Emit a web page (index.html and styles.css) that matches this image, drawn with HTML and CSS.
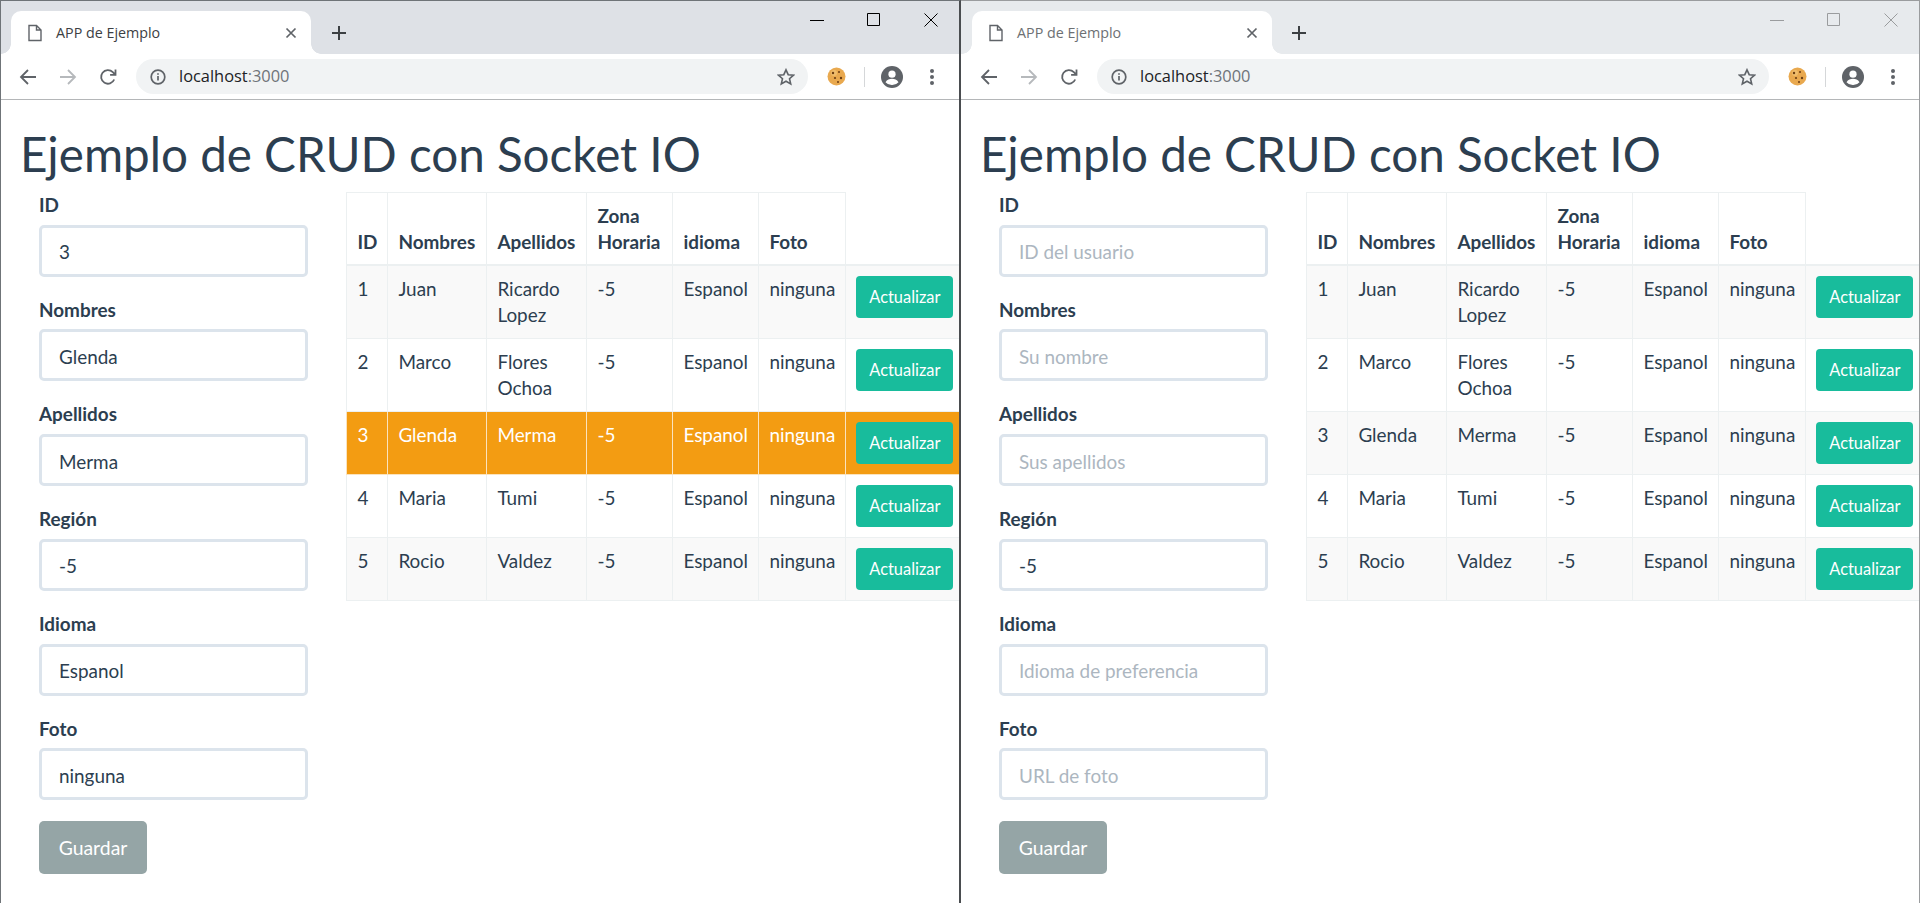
FILE: index.html

```html
<!DOCTYPE html>
<html lang="en">
<head>
  <meta charset="UTF-8">
  <title>APP de Ejemplo</title>
  <link rel="stylesheet" href="styles.css">
</head>
<body>
  <div class="desktop">

    <!-- active window, user 3 loaded in the form -->
    <div class="window active">
      <div class="tabstrip">
        <div class="tab">
          <svg class="ico-doc" width="16" height="18" viewBox="0 0 16 18"><path d="M2 1.5h7.5L14 6v10.5H2zM9.5 1.5V6H14" fill="none" stroke="currentColor" stroke-width="1.4"/></svg>
          <span class="tab-title">APP de Ejemplo</span>
          <svg class="ico-close" width="12" height="12" viewBox="0 0 12 12"><path d="M1.5 1.5l9 9M10.5 1.5l-9 9" stroke="currentColor" stroke-width="1.7"/></svg>
        </div>
        <svg class="ico-plus" width="16" height="16" viewBox="0 0 16 16"><path d="M8 1v14M1 8h14" stroke="currentColor" stroke-width="2"/></svg>
        <div class="caption">
          <svg width="14" height="14" viewBox="0 0 14 14"><path d="M0 7.5h14" stroke="currentColor"/></svg>
          <svg width="14" height="14" viewBox="0 0 14 14"><path d="M.5.5h12v12H.5z" fill="none" stroke="currentColor"/></svg>
          <svg width="14" height="14" viewBox="0 0 14 14"><path d="M.5.5l13 13M13.5.5l-13 13" stroke="currentColor"/></svg>
        </div>
      </div>
      <div class="toolbar">
        <svg class="nav" width="18" height="18" viewBox="0 0 18 18"><path d="M17 9H2M9 2L2 9l7 7" fill="none" stroke="currentColor" stroke-width="1.8"/></svg>
        <svg class="nav nav-off" width="18" height="18" viewBox="0 0 18 18"><path d="M1 9h15M9 2l7 7-7 7" fill="none" stroke="currentColor" stroke-width="1.8"/></svg>
        <svg class="nav nav-reload" width="18" height="18" viewBox="0 0 18 18"><path d="M15.2 11.5A6.8 6.8 0 1 1 13.8 4.2L16 6.4M16.5 1.5v5.4h-5.4" fill="none" stroke="currentColor" stroke-width="1.8"/></svg>
        <div class="omnibox">
          <svg class="ico-info" width="16" height="16" viewBox="0 0 16 16"><circle cx="8" cy="8" r="6.8" fill="none" stroke="currentColor" stroke-width="1.7"/><path d="M8 7v4.5M8 4.2v1.6" stroke="currentColor" stroke-width="1.7"/></svg>
          <span class="url">localhost<span class="port">:3000</span></span>
          <svg class="ico-star" width="18" height="18" viewBox="0 0 18 18"><path d="M9 1.8l2.2 4.9 5.3.5-4 3.5 1.2 5.2L9 13.2l-4.7 2.7 1.2-5.2-4-3.5 5.3-.5z" fill="none" stroke="currentColor" stroke-width="1.6"/></svg>
        </div>
        <svg class="ico-cookie" width="19" height="19" viewBox="0 0 19 19"><circle cx="9.5" cy="9.5" r="9" fill="#e9a94f"/><circle cx="7" cy="6" r="3" fill="#f0bd6c"/><circle cx="6" cy="6" r="1.2" fill="#6b3d12"/><circle cx="12" cy="5" r="1" fill="#6b3d12"/><circle cx="8" cy="11" r="1.1" fill="#6b3d12"/><circle cx="14" cy="11" r="1.2" fill="#6b3d12"/><circle cx="11" cy="15" r="1" fill="#6b3d12"/></svg>
        <span class="tool-sep"></span>
        <svg class="ico-user" width="22" height="22" viewBox="0 0 22 22"><circle cx="11" cy="11" r="11" fill="currentColor"/><circle cx="11" cy="8.2" r="3.6" fill="#fff"/><path d="M4.5 16.2c1.5-2.6 4-3.4 6.5-3.4s5 .8 6.5 3.4A8.3 8.3 0 0 1 11 19a8.3 8.3 0 0 1-6.5-2.8z" fill="#fff"/></svg>
        <svg class="ico-menu" width="6" height="18" viewBox="0 0 6 18"><circle cx="3" cy="3" r="2" fill="currentColor"/><circle cx="3" cy="9" r="2" fill="currentColor"/><circle cx="3" cy="15" r="2" fill="currentColor"/></svg>
      </div>
      <div class="page">
        <h1>Ejemplo de CRUD con Socket IO</h1>
        <div class="crud">
          <form class="user-form">
            <div class="form-group"><label>ID</label><input type="text" value="3" placeholder="ID del usuario"></div>
            <div class="form-group"><label>Nombres</label><input type="text" value="Glenda" placeholder="Su nombre"></div>
            <div class="form-group"><label>Apellidos</label><input type="text" value="Merma" placeholder="Sus apellidos"></div>
            <div class="form-group"><label>Región</label><input type="text" value="-5"></div>
            <div class="form-group"><label>Idioma</label><input type="text" value="Espanol" placeholder="Idioma de preferencia"></div>
            <div class="form-group"><label>Foto</label><input type="text" value="ninguna" placeholder="URL de foto"></div>
            <button type="button" class="btn-save">Guardar</button>
          </form>
          <table class="users">
            <colgroup><col class="c-id"><col class="c-nom"><col class="c-ape"><col class="c-zona"><col class="c-idi"><col class="c-foto"><col class="c-btn"></colgroup>
            <thead>
              <tr><th>ID</th><th>Nombres</th><th>Apellidos</th><th>Zona Horaria</th><th>idioma</th><th>Foto</th><th class="no-border"></th></tr>
            </thead>
            <tbody>
              <tr><td>1</td><td>Juan</td><td>Ricardo Lopez</td><td>-5</td><td>Espanol</td><td>ninguna</td><td><button type="button" class="btn-update">Actualizar</button></td></tr>
              <tr><td>2</td><td>Marco</td><td>Flores Ochoa</td><td>-5</td><td>Espanol</td><td>ninguna</td><td><button type="button" class="btn-update">Actualizar</button></td></tr>
              <tr class="selected"><td>3</td><td>Glenda</td><td>Merma</td><td>-5</td><td>Espanol</td><td>ninguna</td><td><button type="button" class="btn-update">Actualizar</button></td></tr>
              <tr><td>4</td><td>Maria</td><td>Tumi</td><td>-5</td><td>Espanol</td><td>ninguna</td><td><button type="button" class="btn-update">Actualizar</button></td></tr>
              <tr><td>5</td><td>Rocio</td><td>Valdez</td><td>-5</td><td>Espanol</td><td>ninguna</td><td><button type="button" class="btn-update">Actualizar</button></td></tr>
            </tbody>
          </table>
        </div>
      </div>
    </div>

    <!-- second window, out of focus, empty form -->
    <div class="window inactive">
      <div class="tabstrip">
        <div class="tab">
          <svg class="ico-doc" width="16" height="18" viewBox="0 0 16 18"><path d="M2 1.5h7.5L14 6v10.5H2zM9.5 1.5V6H14" fill="none" stroke="currentColor" stroke-width="1.4"/></svg>
          <span class="tab-title">APP de Ejemplo</span>
          <svg class="ico-close" width="12" height="12" viewBox="0 0 12 12"><path d="M1.5 1.5l9 9M10.5 1.5l-9 9" stroke="currentColor" stroke-width="1.7"/></svg>
        </div>
        <svg class="ico-plus" width="16" height="16" viewBox="0 0 16 16"><path d="M8 1v14M1 8h14" stroke="currentColor" stroke-width="2"/></svg>
        <div class="caption">
          <svg width="14" height="14" viewBox="0 0 14 14"><path d="M0 7.5h14" stroke="currentColor"/></svg>
          <svg width="14" height="14" viewBox="0 0 14 14"><path d="M.5.5h12v12H.5z" fill="none" stroke="currentColor"/></svg>
          <svg width="14" height="14" viewBox="0 0 14 14"><path d="M.5.5l13 13M13.5.5l-13 13" stroke="currentColor"/></svg>
        </div>
      </div>
      <div class="toolbar">
        <svg class="nav" width="18" height="18" viewBox="0 0 18 18"><path d="M17 9H2M9 2L2 9l7 7" fill="none" stroke="currentColor" stroke-width="1.8"/></svg>
        <svg class="nav nav-off" width="18" height="18" viewBox="0 0 18 18"><path d="M1 9h15M9 2l7 7-7 7" fill="none" stroke="currentColor" stroke-width="1.8"/></svg>
        <svg class="nav nav-reload" width="18" height="18" viewBox="0 0 18 18"><path d="M15.2 11.5A6.8 6.8 0 1 1 13.8 4.2L16 6.4M16.5 1.5v5.4h-5.4" fill="none" stroke="currentColor" stroke-width="1.8"/></svg>
        <div class="omnibox">
          <svg class="ico-info" width="16" height="16" viewBox="0 0 16 16"><circle cx="8" cy="8" r="6.8" fill="none" stroke="currentColor" stroke-width="1.7"/><path d="M8 7v4.5M8 4.2v1.6" stroke="currentColor" stroke-width="1.7"/></svg>
          <span class="url">localhost<span class="port">:3000</span></span>
          <svg class="ico-star" width="18" height="18" viewBox="0 0 18 18"><path d="M9 1.8l2.2 4.9 5.3.5-4 3.5 1.2 5.2L9 13.2l-4.7 2.7 1.2-5.2-4-3.5 5.3-.5z" fill="none" stroke="currentColor" stroke-width="1.6"/></svg>
        </div>
        <svg class="ico-cookie" width="19" height="19" viewBox="0 0 19 19"><circle cx="9.5" cy="9.5" r="9" fill="#e9a94f"/><circle cx="7" cy="6" r="3" fill="#f0bd6c"/><circle cx="6" cy="6" r="1.2" fill="#6b3d12"/><circle cx="12" cy="5" r="1" fill="#6b3d12"/><circle cx="8" cy="11" r="1.1" fill="#6b3d12"/><circle cx="14" cy="11" r="1.2" fill="#6b3d12"/><circle cx="11" cy="15" r="1" fill="#6b3d12"/></svg>
        <span class="tool-sep"></span>
        <svg class="ico-user" width="22" height="22" viewBox="0 0 22 22"><circle cx="11" cy="11" r="11" fill="currentColor"/><circle cx="11" cy="8.2" r="3.6" fill="#fff"/><path d="M4.5 16.2c1.5-2.6 4-3.4 6.5-3.4s5 .8 6.5 3.4A8.3 8.3 0 0 1 11 19a8.3 8.3 0 0 1-6.5-2.8z" fill="#fff"/></svg>
        <svg class="ico-menu" width="6" height="18" viewBox="0 0 6 18"><circle cx="3" cy="3" r="2" fill="currentColor"/><circle cx="3" cy="9" r="2" fill="currentColor"/><circle cx="3" cy="15" r="2" fill="currentColor"/></svg>
      </div>
      <div class="page">
        <h1>Ejemplo de CRUD con Socket IO</h1>
        <div class="crud">
          <form class="user-form">
            <div class="form-group"><label>ID</label><input type="text" placeholder="ID del usuario"></div>
            <div class="form-group"><label>Nombres</label><input type="text" placeholder="Su nombre"></div>
            <div class="form-group"><label>Apellidos</label><input type="text" placeholder="Sus apellidos"></div>
            <div class="form-group"><label>Región</label><input type="text" value="-5"></div>
            <div class="form-group"><label>Idioma</label><input type="text" placeholder="Idioma de preferencia"></div>
            <div class="form-group"><label>Foto</label><input type="text" placeholder="URL de foto"></div>
            <button type="button" class="btn-save">Guardar</button>
          </form>
          <table class="users">
            <colgroup><col class="c-id"><col class="c-nom"><col class="c-ape"><col class="c-zona"><col class="c-idi"><col class="c-foto"><col class="c-btn"></colgroup>
            <thead>
              <tr><th>ID</th><th>Nombres</th><th>Apellidos</th><th>Zona Horaria</th><th>idioma</th><th>Foto</th><th class="no-border"></th></tr>
            </thead>
            <tbody>
              <tr><td>1</td><td>Juan</td><td>Ricardo Lopez</td><td>-5</td><td>Espanol</td><td>ninguna</td><td><button type="button" class="btn-update">Actualizar</button></td></tr>
              <tr><td>2</td><td>Marco</td><td>Flores Ochoa</td><td>-5</td><td>Espanol</td><td>ninguna</td><td><button type="button" class="btn-update">Actualizar</button></td></tr>
              <tr><td>3</td><td>Glenda</td><td>Merma</td><td>-5</td><td>Espanol</td><td>ninguna</td><td><button type="button" class="btn-update">Actualizar</button></td></tr>
              <tr><td>4</td><td>Maria</td><td>Tumi</td><td>-5</td><td>Espanol</td><td>ninguna</td><td><button type="button" class="btn-update">Actualizar</button></td></tr>
              <tr><td>5</td><td>Rocio</td><td>Valdez</td><td>-5</td><td>Espanol</td><td>ninguna</td><td><button type="button" class="btn-update">Actualizar</button></td></tr>
            </tbody>
          </table>
        </div>
      </div>
    </div>

  </div>
</body>
</html>
```

FILE: styles.css

```css
* {
  box-sizing: border-box;
}
html, body {
  margin: 0;
  height: 100%;
  overflow: hidden;
}
body {
  font-family: Lato, 'Open Sans', sans-serif;
  font-size: 18.9px;
  line-height: 1.5;
  color: #2c3e50;
  background: #fff;
}
.desktop {
  display: flex;
  height: 903px;
}
.window {
  height: 903px;
  flex: none;
  overflow: hidden;
  display: flex;
  flex-direction: column;
  background: #fff;
}
.window.active {
  width: 961px;
  border-top: 1px solid #6f7478;
  border-left: 1px solid #6f7478;
  border-right: 2px solid #4a4d50;
}
.window.inactive {
  width: 959px;
  border-top: 1px solid #9a9c9e;
  border-right: 1px solid #9a9c9e;
}

/* browser chrome */
.tabstrip {
  height: 53px;
  flex: none;
  display: flex;
  align-items: flex-end;
  background: #dee1e6;
  color: #3c4043;
}
.inactive .tabstrip {
  background: #e7eaed;
}
.tab {
  position: relative;
  width: 300px;
  height: 43px;
  margin-left: 10px;
  padding: 0 14px 0 16px;
  display: flex;
  align-items: center;
  background: #fff;
  border-radius: 10px 10px 0 0;
  font-family: 'Open Sans', sans-serif;
  font-size: 14.3px;
}
.inactive .tab {
  margin-left: 11px;
}
.tab::before, .tab::after {
  content: "";
  position: absolute;
  bottom: 0;
  width: 10px;
  height: 10px;
}
.tab::before {
  left: -10px;
  background: radial-gradient(circle at 0 0, transparent 9.5px, #fff 10px);
}
.tab::after {
  right: -10px;
  background: radial-gradient(circle at 100% 0, transparent 9.5px, #fff 10px);
}
.ico-doc {
  color: #5f6368;
  flex: none;
}
.tab-title {
  flex: 1;
  margin-left: 13px;
  color: #3c4043;
}
.inactive .tab-title {
  color: #6d7073;
}
.ico-close {
  flex: none;
  color: #5f6368;
}
.ico-plus {
  margin: 0 0 13px 20px;
  flex: none;
}
.inactive .ico-plus {
  margin-left: 19px;
}
.caption {
  margin-left: auto;
  align-self: flex-start;
  display: flex;
  gap: 43px;
  padding: 12px 21px 0 0;
  color: #000;
}
.inactive .caption {
  color: #9a9c9e;
}
.toolbar {
  height: 46px;
  flex: none;
  display: flex;
  align-items: center;
  padding: 0 0 0 18px;
  background: #fff;
  border-bottom: 1px solid #b4b6b8;
  color: #5f6368;
}
.inactive .toolbar {
  padding-left: 19px;
}
.nav {
  flex: none;
  margin-right: 22px;
}
.nav-off {
  color: #b6b9bc;
}
.nav-reload {
  margin-right: 19px;
}
.omnibox {
  width: 672px;
  height: 35px;
  padding: 0 13px 0 14px;
  display: flex;
  align-items: center;
  background: #f1f3f4;
  border-radius: 18px;
}
.ico-info {
  flex: none;
}
.url {
  flex: 1;
  margin-left: 13px;
  font-family: 'Open Sans', sans-serif;
  font-size: 16.4px;
  color: #202124;
}
.port {
  color: #6f7479;
}
.ico-star {
  flex: none;
}
.ico-cookie {
  flex: none;
  margin-left: 19px;
}
.tool-sep {
  width: 1px;
  height: 20px;
  margin: 0 16px 0 18px;
  background: #d5d7d9;
}
.ico-user {
  flex: none;
}
.ico-menu {
  flex: none;
  margin-left: 26px;
}

/* page */
.page {
  flex: 1;
  min-height: 0;
  padding-left: 19px;
}
h1 {
  margin: 0;
  height: 92px;
  padding-top: 8px;
  font-size: 47.6px;
  font-weight: 400;
  line-height: 92px;
  color: #2c3e50;
  white-space: nowrap;
}
.crud {
  display: flex;
  align-items: flex-start;
}
.user-form {
  width: 269px;
  margin-left: 19px;
  flex: none;
}
.form-group {
  margin-bottom: 20px;
}
label {
  display: block;
  margin-bottom: 7.5px;
  font-weight: 700;
  line-height: 25.2px;
}
input {
  display: block;
  width: 100%;
  height: 52px;
  padding: 2px 17px 0;
  border: 3px solid #dce4ec;
  border-radius: 5px;
  font-family: inherit;
  font-size: 18.9px;
  color: #2c3e50;
  background: #fff;
  outline: none;
}
input::placeholder {
  color: #acb6c0;
}
.btn-save {
  display: block;
  width: 108px;
  height: 53px;
  margin-top: 21px;
  border: none;
  border-radius: 5px;
  background: #95a5a6;
  color: #fff;
  font-family: inherit;
  font-size: 19.4px;
}

/* table */
.users {
  flex: none;
  width: 618px;
  margin-left: 38px;
  table-layout: fixed;
  border-collapse: collapse;
}
.c-id { width: 41px; }
.c-nom { width: 99px; }
.c-ape { width: 100px; }
.c-zona { width: 86px; }
.c-idi { width: 86px; }
.c-foto { width: 87px; }
.c-btn { width: 119px; }
.users th, .users td {
  padding: 9.5px 10.4px 10.5px;
  border: 1px solid #ecf0f1;
  text-align: left;
  vertical-align: top;
  line-height: 26px;
}
.users th {
  padding: 9.5px 10.4px;
  vertical-align: bottom;
  font-weight: 700;
  border-bottom-width: 2px;
}
.users th.no-border {
  border-top: none;
  border-right: none;
  border-bottom-width: 2px;
}
.users tbody tr:nth-child(odd) {
  background: #f9f9f9;
}
.users tbody tr.selected {
  background: #f39c12;
  color: #fff;
}
.users tr.selected td {
  border-color: #fbe3bd;
}
.btn-update {
  display: block;
  width: 97px;
  height: 42px;
  border: none;
  border-radius: 4px;
  background: #18bc9c;
  color: #fff;
  font-family: inherit;
  font-size: 16.4px;
}
```
